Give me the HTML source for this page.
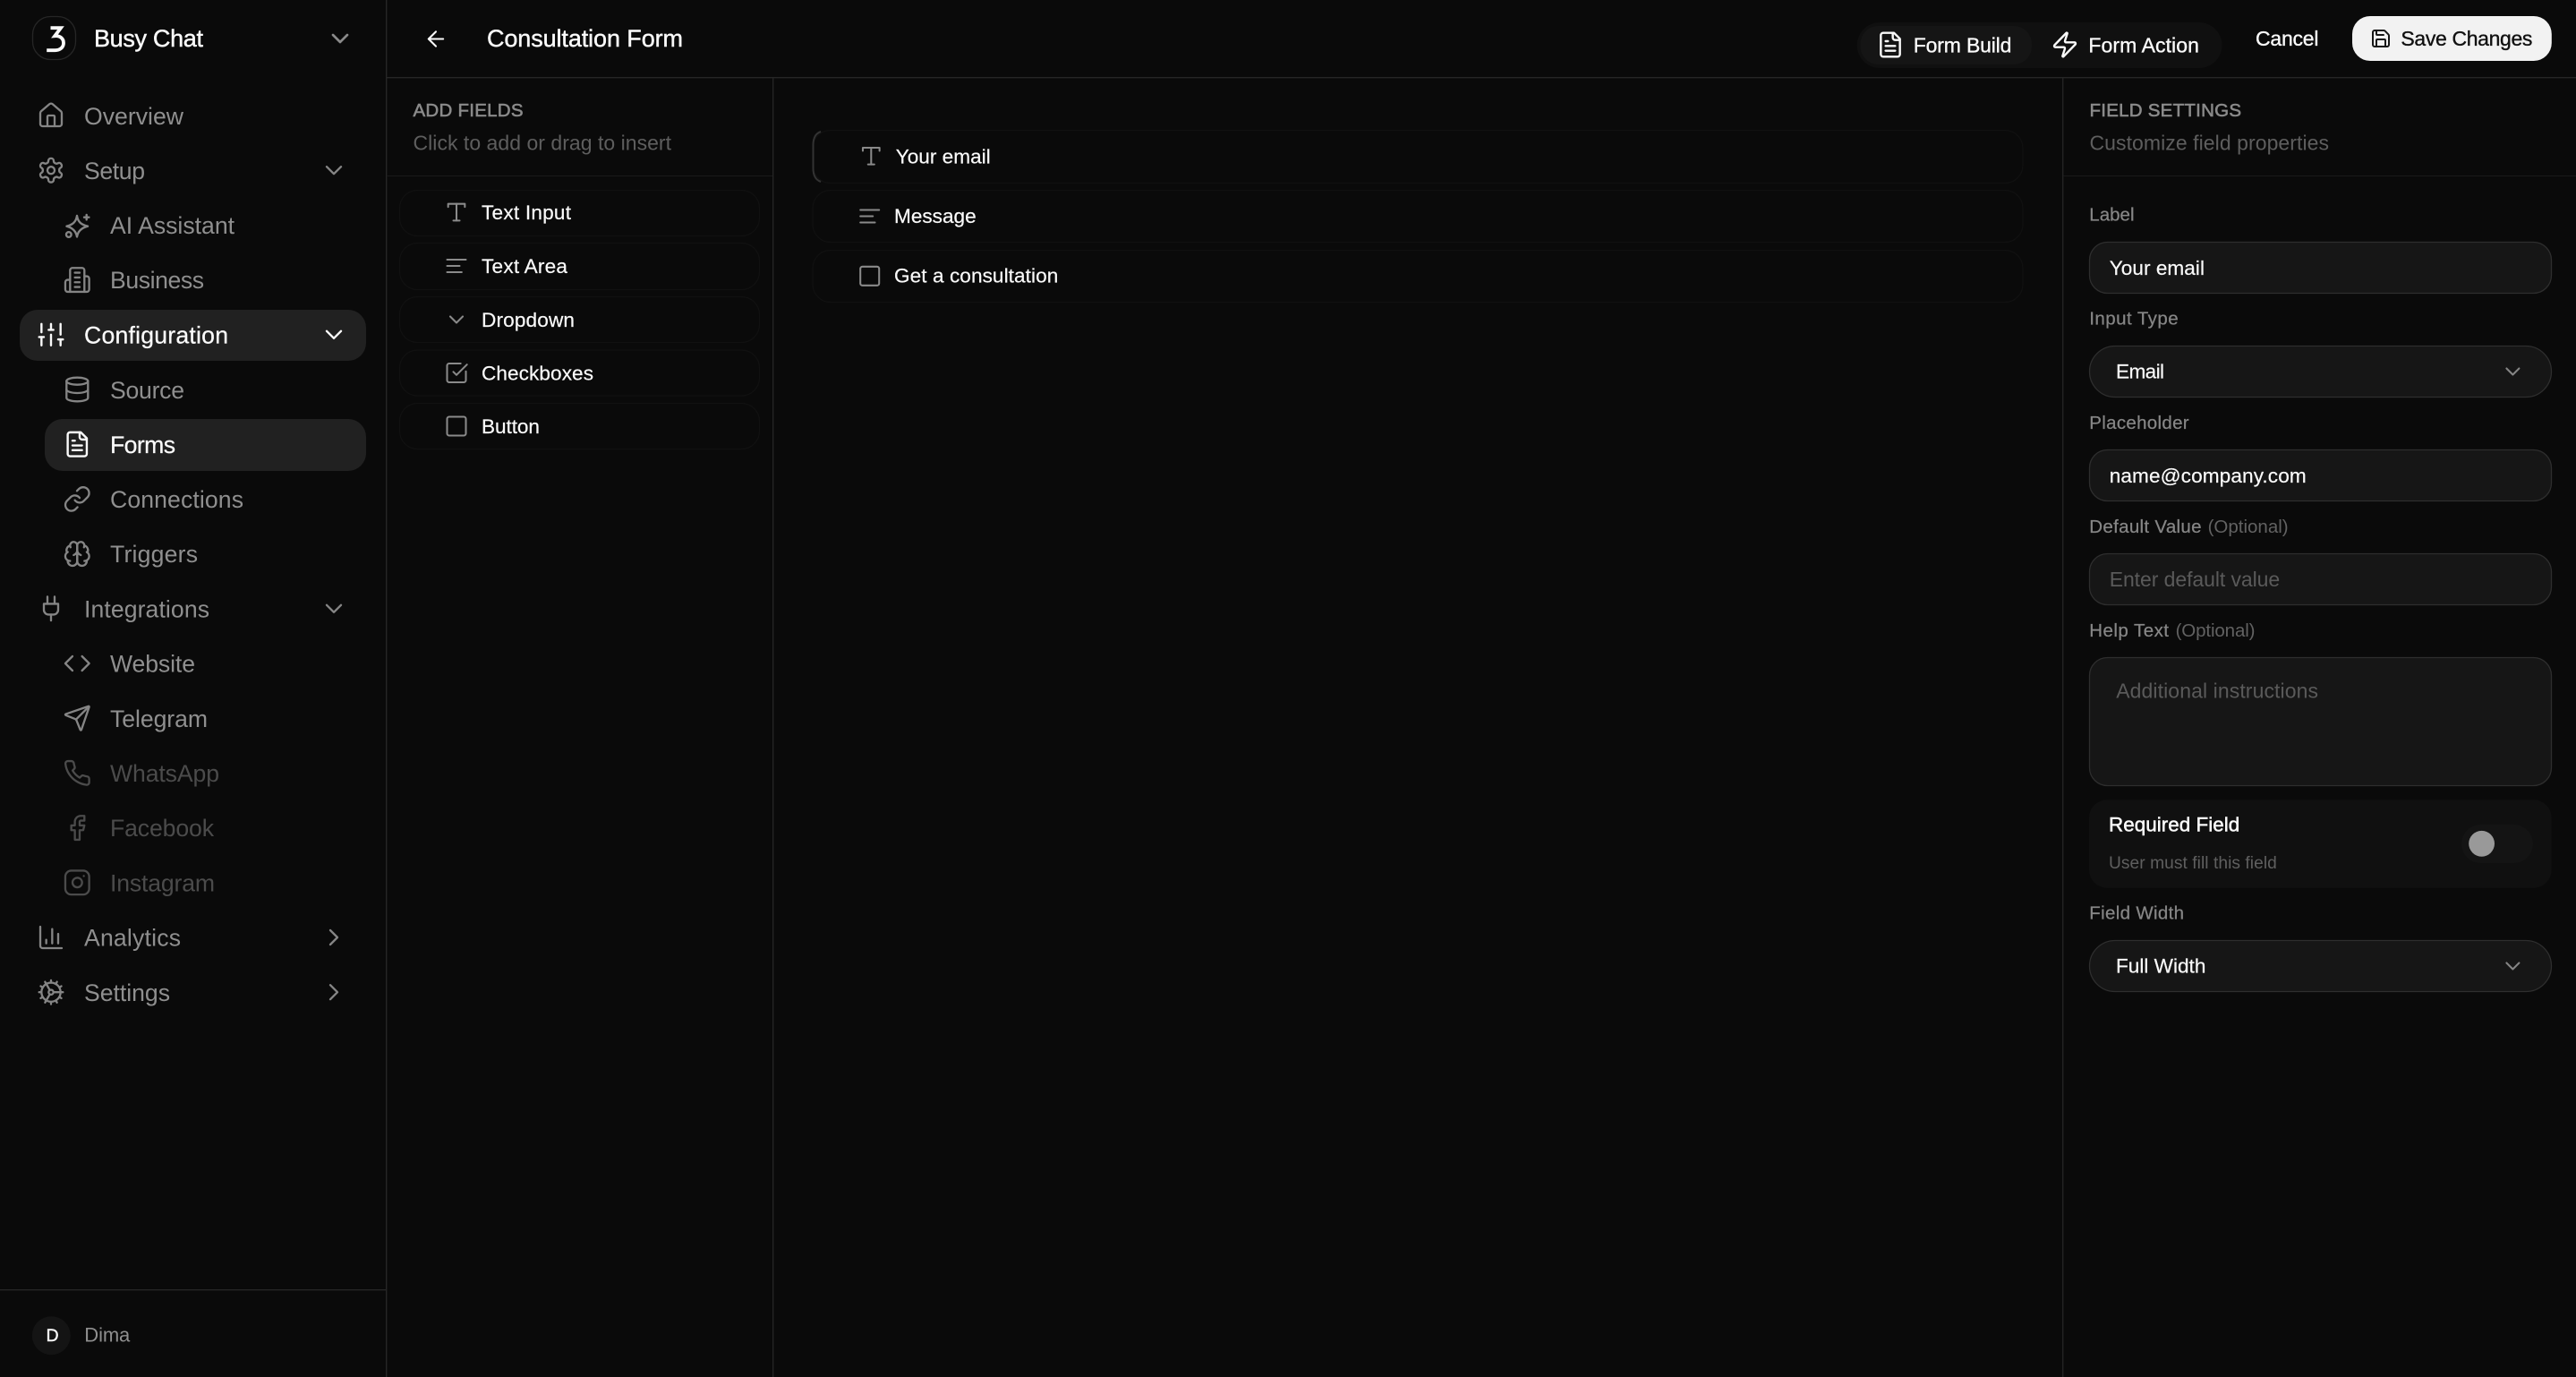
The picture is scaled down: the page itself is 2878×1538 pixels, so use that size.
<!DOCTYPE html>
<html lang="en">
<head>
<meta charset="utf-8">
<title>Consultation Form</title>
<style>
html,body{margin:0;padding:0;background:#0a0a0a;width:2878px;height:1538px;overflow:hidden}
svg{display:block}
text{font-family:"Liberation Sans",Arial,sans-serif}
.nav{font-size:26.6px;fill:#8f8f8f}
.on{font-size:26.6px;fill:#fafafa;stroke:#fafafa;stroke-width:.25px}
.dim{font-size:26.6px;fill:#4b4b4b}
.f{font-size:22.6px;fill:#fafafa;stroke:#fafafa;stroke-width:.2px}
.b{font-size:23px;fill:#fafafa;stroke:#fafafa;stroke-width:.35px}
.cap{font-size:20.5px;fill:#8a8a8a;stroke:#8a8a8a;stroke-width:.6px}
.sub{font-size:23px;fill:#5e5e5e}
.lab{font-size:20.5px;fill:#868686;stroke:#868686;stroke-width:.25px}
.opt{font-size:20.5px;fill:#626262}
.ph{font-size:23px;fill:#5a5a5a}
.i{fill:none;stroke-linecap:round;stroke-linejoin:round;stroke-width:2}
.mi{fill:none;stroke:#858585;stroke-linecap:round;stroke-linejoin:round;stroke-width:1.75}
.dmi{fill:none;stroke:#4b4b4b;stroke-linecap:round;stroke-linejoin:round;stroke-width:1.75}
.onicon{fill:none;stroke:#fafafa;stroke-linecap:round;stroke-linejoin:round;stroke-width:1.8}
.fi{fill:none;stroke:#8a8a8a;stroke-linecap:round;stroke-linejoin:round;stroke-width:1.75}
</style>
</head>
<body>
<svg xmlns="http://www.w3.org/2000/svg" width="2878" height="1538" viewBox="0 0 2878 1538">
<defs>
<g id="cd"><path d="m6 9 6 6 6-6"/></g>
<g id="cr"><path d="m9 18 6-6-6-6"/></g>
<g id="type"><polyline points="4 7 4 4 20 4 20 7"/><line x1="9" x2="15" y1="20" y2="20"/><line x1="12" x2="12" y1="4" y2="20"/></g>
<g id="align"><line x1="21" x2="3" y1="6" y2="6"/><line x1="15" x2="3" y1="12" y2="12"/><line x1="17" x2="3" y1="18" y2="18"/></g>
<g id="sq"><rect width="18" height="18" x="3" y="3" rx="2"/></g>
<g id="file"><path d="M15 2H6a2 2 0 0 0-2 2v16a2 2 0 0 0 2 2h12a2 2 0 0 0 2-2V7Z"/><path d="M14 2v4a2 2 0 0 0 2 2h4"/><path d="M10 9H8"/><path d="M16 13H8"/><path d="M16 17H8"/></g>
</defs>

<rect width="2878" height="1538" fill="#0a0a0a"/>

<!-- structure lines -->
<rect x="431" y="0" width="1.4" height="1538" fill="#262626"/>
<rect x="432" y="86" width="2446" height="1.4" fill="#262626"/>
<rect x="863" y="87" width="1.4" height="1451" fill="#242424"/>
<rect x="2304" y="87" width="1.4" height="1451" fill="#242424"/>
<rect x="432" y="196" width="431" height="1" fill="#1a1a1a"/>
<rect x="2305" y="196" width="573" height="1" fill="#1a1a1a"/>
<rect x="0" y="1440" width="431" height="1.4" fill="#262626"/>

<!-- logo -->
<rect x="36.5" y="18.5" width="48" height="48" rx="20" fill="#0a0a0a" stroke="#262626" stroke-width="1.3"/>
<path d="M56.5 31.2H68L61.2 40.2C67 39.6 71 43 71 48C71 53 67 56.2 61.5 56.2H52.2" fill="none" stroke="#fafafa" stroke-width="3.8" stroke-linejoin="miter"/>
<text x="105" y="52" textLength="122" font-size="27" fill="#fafafa" stroke="#fafafa" stroke-width=".45">Busy Chat</text>
<use href="#cd" class="i" stroke="#8a8a8a" transform="translate(364 27) scale(1.333)"/>

<!-- active pills -->
<rect x="22" y="346" width="387" height="57" rx="20" fill="#212121"/>
<rect x="50" y="468" width="359" height="58" rx="20" fill="#212121"/>

<!-- nav icons -->
<g class="mi" transform="translate(41 113) scale(1.333)"><path d="M15 21v-8a1 1 0 0 0-1-1h-4a1 1 0 0 0-1 1v8"/><path d="M3 10a2 2 0 0 1 .709-1.528l7-5.999a2 2 0 0 1 2.582 0l7 5.999A2 2 0 0 1 21 10v9a2 2 0 0 1-2 2H5a2 2 0 0 1-2-2z"/></g>
<g class="mi" transform="translate(41 174.2) scale(1.333)"><path d="M12.22 2h-.44a2 2 0 0 0-2 2v.18a2 2 0 0 1-1 1.73l-.43.25a2 2 0 0 1-2 0l-.15-.08a2 2 0 0 0-2.73.73l-.22.38a2 2 0 0 0 .73 2.73l.15.1a2 2 0 0 1 1 1.72v.51a2 2 0 0 1-1 1.74l-.15.09a2 2 0 0 0-.73 2.73l.22.38a2 2 0 0 0 2.73.73l.15-.08a2 2 0 0 1 2 0l.43.25a2 2 0 0 1 1 1.73V20a2 2 0 0 0 2 2h.44a2 2 0 0 0 2-2v-.18a2 2 0 0 1 1-1.73l.43-.25a2 2 0 0 1 2 0l.15.08a2 2 0 0 0 2.73-.73l.22-.39a2 2 0 0 0-.73-2.73l-.15-.08a2 2 0 0 1-1-1.74v-.5a2 2 0 0 1 1-1.74l.15-.09a2 2 0 0 0 .73-2.73l-.22-.38a2 2 0 0 0-2.73-.73l-.15.08a2 2 0 0 1-2 0l-.43-.25a2 2 0 0 1-1-1.73V4a2 2 0 0 0-2-2z"/><circle cx="12" cy="12" r="3"/></g>
<g fill="none" stroke="#858585" stroke-width="2.4" stroke-linecap="round" stroke-linejoin="round"><path d="M86 241C87 248 91 251 98 252.700C91 254.500 87 258 86 264.500C85 258 81 254.500 74.500 252.700C81 251 85 248 86 241Z"/><path d="M96.700 240v5.400M94 242.700h5.400"/><circle cx="76.800" cy="262" r="2.800"/></g>
<g class="mi" transform="translate(70.300 296.600) scale(1.333)"><path d="M6 22V4a2 2 0 0 1 2-2h8a2 2 0 0 1 2 2v18Z"/><path d="M6 12H4a2 2 0 0 0-2 2v6a2 2 0 0 0 2 2h2"/><path d="M18 9h2a2 2 0 0 1 2 2v9a2 2 0 0 1-2 2h-2"/><path d="M10 6h4"/><path d="M10 10h4"/><path d="M10 14h4"/><path d="M10 18h4"/></g>
<g class="onicon" transform="translate(41 357.800) scale(1.333)"><line x1="4" x2="4" y1="21" y2="14"/><line x1="4" x2="4" y1="10" y2="3"/><line x1="12" x2="12" y1="21" y2="12"/><line x1="12" x2="12" y1="8" y2="3"/><line x1="20" x2="20" y1="21" y2="16"/><line x1="20" x2="20" y1="12" y2="3"/><line x1="2" x2="6" y1="14" y2="14"/><line x1="10" x2="14" y1="8" y2="8"/><line x1="18" x2="22" y1="16" y2="16"/></g>
<g class="mi" transform="translate(70.300 419) scale(1.333)"><ellipse cx="12" cy="5" rx="9" ry="3"/><path d="M3 5V19A9 3 0 0 0 21 19V5"/><path d="M3 12A9 3 0 0 0 21 12"/></g>
<use href="#file" class="onicon" transform="translate(70.300 480.200) scale(1.333)"/>
<g class="mi" transform="translate(70.300 541.400) scale(1.333)"><path d="M10 13a5 5 0 0 0 7.54.54l3-3a5 5 0 0 0-7.07-7.07l-1.72 1.71"/><path d="M14 11a5 5 0 0 0-7.54-.54l-3 3a5 5 0 0 0 7.07 7.07l1.71-1.71"/></g>
<g class="mi" transform="translate(70.300 602.600) scale(1.333)"><path d="M12 5a3 3 0 1 0-5.997.125 4 4 0 0 0-2.526 5.77 4 4 0 0 0 .556 6.588A4 4 0 1 0 12 18Z"/><path d="M12 5a3 3 0 1 1 5.997.125 4 4 0 0 1 2.526 5.77 4 4 0 0 1-.556 6.588A4 4 0 1 1 12 18Z"/><path d="M15 13a4.5 4.5 0 0 1-3-4 4.5 4.5 0 0 1-3 4"/><path d="M17.599 6.5a3 3 0 0 0 .399-1.375"/><path d="M6.003 5.125A3 3 0 0 0 6.401 6.5"/><path d="M3.477 10.896a4 4 0 0 1 .585-.396"/><path d="M19.938 10.5a4 4 0 0 1 .585.396"/><path d="M6 18a4 4 0 0 1-1.967-.516"/><path d="M19.967 17.484A4 4 0 0 1 18 18"/></g>
<g class="mi" transform="translate(41 663.800) scale(1.333)"><path d="M12 22v-5"/><path d="M9 8V2"/><path d="M15 8V2"/><path d="M18 8v5a4 4 0 0 1-4 4h-4a4 4 0 0 1-4-4V8Z"/></g>
<g class="mi" transform="translate(70.300 725) scale(1.333)"><polyline points="16 18 22 12 16 6"/><polyline points="8 6 2 12 8 18"/></g>
<g class="mi" transform="translate(70.300 786.200) scale(1.333)"><path d="M14.536 21.686a.5.5 0 0 0 .937-.024l6.5-19a.496.496 0 0 0-.635-.635l-19 6.5a.5.5 0 0 0-.024.937l7.93 3.18a2 2 0 0 1 1.112 1.11z"/><path d="m21.854 2.147-10.94 10.939"/></g>
<g class="dmi" transform="translate(70.300 847.400) scale(1.333)"><path d="M22 16.92v3a2 2 0 0 1-2.18 2 19.79 19.79 0 0 1-8.63-3.07 19.5 19.5 0 0 1-6-6 19.79 19.79 0 0 1-3.07-8.67A2 2 0 0 1 4.11 2h3a2 2 0 0 1 2 1.72 12.84 12.84 0 0 0 .7 2.81 2 2 0 0 1-.45 2.11L8.09 9.91a16 16 0 0 0 6 6l1.27-1.27a2 2 0 0 1 2.11-.45 12.84 12.84 0 0 0 2.81.7A2 2 0 0 1 22 16.92z"/></g>
<g class="dmi" transform="translate(70.300 908.600) scale(1.333)"><path d="M18 2h-3a5 5 0 0 0-5 5v3H7v4h3v8h4v-8h3l1-4h-4V7a1 1 0 0 1 1-1h3z"/></g>
<g class="dmi" transform="translate(70.300 969.800) scale(1.333)"><rect width="20" height="20" x="2" y="2" rx="5" ry="5"/><path d="M16 11.37A4 4 0 1 1 12.63 8 4 4 0 0 1 16 11.37z"/><line x1="17.5" x2="17.51" y1="6.5" y2="6.5"/></g>
<g class="mi" transform="translate(41 1031) scale(1.333)"><path d="M3 3v16a2 2 0 0 0 2 2h16"/><path d="M18 17V9"/><path d="M13 17V5"/><path d="M8 17v-3"/></g>
<g class="mi" transform="translate(41 1092.200) scale(1.333)"><path d="M12 20a8 8 0 1 0 0-16 8 8 0 0 0 0 16Z"/><path d="M12 14a2 2 0 1 0 0-4 2 2 0 0 0 0 4Z"/><path d="M12 2v2"/><path d="M12 22v-2"/><path d="m17 20.66-1-1.73"/><path d="M11 10.27 7 3.34"/><path d="m20.66 17-1.73-1"/><path d="m3.34 7 1.73 1"/><path d="M14 12h8"/><path d="M2 12h2"/><path d="m20.66 7-1.73 1"/><path d="m3.34 17 1.73-1"/><path d="m17 3.34-1 1.73"/><path d="M11 13.73l-4 6.93"/></g>

<!-- nav chevrons -->
<use href="#cd" class="mi" transform="translate(357 174.200) scale(1.333)"/>
<use href="#cd" class="onicon" transform="translate(357 357.800) scale(1.333)"/>
<use href="#cd" class="mi" transform="translate(357 663.800) scale(1.333)"/>
<use href="#cr" class="mi" transform="translate(357 1031) scale(1.333)"/>
<use href="#cr" class="mi" transform="translate(357 1092.200) scale(1.333)"/>

<!-- nav text -->
<text class="nav" x="94" y="139" textLength="111">Overview</text>
<text class="nav" x="94" y="200" textLength="68">Setup</text>
<text class="nav" x="123" y="261" textLength="139">AI Assistant</text>
<text class="nav" x="123" y="322" textLength="105">Business</text>
<text class="on" x="94" y="383.300" textLength="161">Configuration</text>
<text class="nav" x="123" y="445" textLength="83">Source</text>
<text class="on" x="123" y="506" textLength="73">Forms</text>
<text class="nav" x="123" y="567" textLength="149">Connections</text>
<text class="nav" x="123" y="628" textLength="98">Triggers</text>
<text class="nav" x="94" y="689.400" textLength="140">Integrations</text>
<text class="nav" x="123" y="750.600" textLength="95">Website</text>
<text class="nav" x="123" y="811.800" textLength="109">Telegram</text>
<text class="dim" x="123" y="873" textLength="122">WhatsApp</text>
<text class="dim" x="123" y="934.200" textLength="116">Facebook</text>
<text class="dim" x="123" y="995.400" textLength="117">Instagram</text>
<text class="nav" x="94" y="1056.600" textLength="108">Analytics</text>
<text class="nav" x="94" y="1117.800" textLength="96">Settings</text>

<!-- user -->
<circle cx="57.300" cy="1491.700" r="21.500" fill="#141414"/>
<text x="51.500" y="1498" textLength="12" font-size="19.500" fill="#fafafa" stroke="#fafafa" stroke-width=".4">D</text>
<text x="94.300" y="1498.500" textLength="51" font-size="22" fill="#8f8f8f">Dima</text>

<!-- top bar -->
<g class="onicon" transform="translate(473 29.500) scale(1.167)"><path d="m12 19-7-7 7-7"/><path d="M19 12H5"/></g>
<text x="544" y="52" textLength="219" font-size="27" fill="#fafafa" stroke="#fafafa" stroke-width=".4">Consultation Form</text>

<rect x="2074.700" y="25" width="407.800" height="51" rx="25.500" fill="#101010"/>
<rect x="2078.500" y="29" width="191.500" height="43" rx="20" fill="#151515"/>
<use href="#file" class="onicon" transform="translate(2096 34) scale(1.333)"/>
<text class="b" x="2137.800" y="58.300" textLength="109.600">Form Build</text>
<g class="onicon" transform="translate(2291 34) scale(1.333)"><path d="M4 14a1 1 0 0 1-.78-1.63l9.9-10.2a.5.5 0 0 1 .86.46l-1.92 6.02A1 1 0 0 0 13 10h7a1 1 0 0 1 .78 1.63l-9.9 10.2a.5.5 0 0 1-.86-.46l1.92-6.02A1 1 0 0 0 11 14z"/></g>
<text class="b" x="2333.400" y="58.300" textLength="123.500">Form Action</text>
<text class="b" x="2520" y="51" textLength="70.500">Cancel</text>
<rect x="2628" y="18" width="222.800" height="50" rx="20" fill="#f2f2f2"/>
<g fill="none" stroke="#171717" stroke-width="2" stroke-linecap="round" stroke-linejoin="round" transform="translate(2648 31)"><path d="M15.2 3a2 2 0 0 1 1.4.6l3.8 3.8a2 2 0 0 1 .6 1.4V19a2 2 0 0 1-2 2H5a2 2 0 0 1-2-2V5a2 2 0 0 1 2-2z"/><path d="M17 21v-7a1 1 0 0 0-1-1H8a1 1 0 0 0-1 1v7"/><path d="M7 3v4a1 1 0 0 0 1 1h7"/></g>
<text x="2682.400" y="51" textLength="147" font-size="23" fill="#111111" stroke="#111111" stroke-width=".35">Save Changes</text>

<!-- add fields column -->
<text class="cap" x="461.500" y="130" textLength="123">ADD FIELDS</text>
<text class="sub" x="461.500" y="167.700" textLength="288.500">Click to add or drag to insert</text>
<g fill="#0a0a0a" stroke="#111111" stroke-width="1.200">
<rect x="446.500" y="212.500" width="402" height="51" rx="20"/>
<rect x="446.500" y="271.500" width="402" height="52" rx="20"/>
<rect x="446.500" y="331.500" width="402" height="51" rx="20"/>
<rect x="446.500" y="391" width="402" height="51" rx="20"/>
<rect x="446.500" y="450.500" width="402" height="51" rx="20"/>
</g>
<use href="#type" class="fi" transform="translate(496 223) scale(1.167)"/>
<use href="#align" class="fi" transform="translate(496 283) scale(1.167)"/>
<use href="#cd" class="fi" transform="translate(496 343) scale(1.167)"/>
<g class="fi" transform="translate(496 402.500) scale(1.167)"><path d="M21 10.5V19a2 2 0 0 1-2 2H5a2 2 0 0 1-2-2V5a2 2 0 0 1 2-2h11"/><path d="m9 11 3 3L22 4"/></g>
<use href="#sq" class="fi" transform="translate(496 462) scale(1.167)"/>
<text class="f" x="538" y="245" textLength="100">Text Input</text>
<text class="f" x="538" y="305" textLength="96">Text Area</text>
<text class="f" x="538" y="365" textLength="104">Dropdown</text>
<text class="f" x="538" y="424.500" textLength="125">Checkboxes</text>
<text class="f" x="538" y="484" textLength="65">Button</text>

<!-- canvas fields -->
<g fill="#0a0a0a" stroke="#111111" stroke-width="1.200">
<rect x="908" y="145.500" width="1352" height="59" rx="20"/>
<rect x="908" y="212.500" width="1352" height="58" rx="20"/>
<rect x="908" y="279.500" width="1352" height="58" rx="20"/>
</g>
<path d="M917 147Q908.500 150 908.500 162V188Q908.500 200 917 203" fill="none" stroke="#333333" stroke-width="2"/>
<use href="#type" class="fi" transform="translate(959.300 160.300) scale(1.167)"/>
<use href="#align" class="fi" transform="translate(957.700 227.500) scale(1.167)"/>
<use href="#sq" class="fi" transform="translate(957.700 294.300) scale(1.167)"/>
<text class="f" x="1000.700" y="182.300" textLength="106">Your email</text>
<text class="f" x="999" y="249" textLength="91.700">Message</text>
<text class="f" x="999" y="315.700" textLength="183.300">Get a consultation</text>

<!-- settings column -->
<text class="cap" x="2334.500" y="130" textLength="169.500">FIELD SETTINGS</text>
<text class="sub" x="2334.500" y="167.700" textLength="267.500">Customize field properties</text>

<text class="lab" x="2334.300" y="246.700" textLength="50.200">Label</text>
<rect x="2334.500" y="270.500" width="516" height="57" rx="20" fill="#161616" stroke="#2e2e2e" stroke-width="1.300"/>
<text class="f" x="2356.700" y="307" textLength="106.300">Your email</text>

<text class="lab" x="2334.300" y="362.700" textLength="99.300">Input Type</text>
<rect x="2334.500" y="386.500" width="516" height="57" rx="28.500" fill="#161616" stroke="#2e2e2e" stroke-width="1.300"/>
<text class="f" x="2364" y="422.700" textLength="54">Email</text>
<use href="#cd" class="mi" transform="translate(2793.400 401) scale(1.167)"/>

<text class="lab" x="2334.300" y="479" textLength="111.300">Placeholder</text>
<rect x="2334.500" y="502.500" width="516" height="57" rx="20" fill="#161616" stroke="#2e2e2e" stroke-width="1.300"/>
<text class="f" x="2356.700" y="539" textLength="220">name@company.com</text>

<text class="lab" x="2334.300" y="595" textLength="125.200">Default Value</text>
<text class="opt" x="2466.600" y="595" textLength="90">(Optional)</text>
<rect x="2334.500" y="618.500" width="516" height="57" rx="20" fill="#161616" stroke="#2e2e2e" stroke-width="1.300"/>
<text class="ph" x="2356.700" y="655" textLength="190.500">Enter default value</text>

<text class="lab" x="2334.300" y="711" textLength="88.700">Help Text</text>
<text class="opt" x="2430.600" y="711" textLength="88.900">(Optional)</text>
<rect x="2334.500" y="734.500" width="516" height="143" rx="20" fill="#161616" stroke="#2e2e2e" stroke-width="1.300"/>
<text class="ph" x="2364.200" y="779.300" textLength="225.800">Additional instructions</text>

<rect x="2334" y="893.300" width="516.600" height="98.400" rx="20" fill="#101010"/>
<text x="2356" y="928.300" textLength="146.200" font-size="22.400" fill="#fafafa" stroke="#fafafa" stroke-width=".5">Required Field</text>
<text x="2356" y="970" textLength="187.800" font-size="19.200" fill="#5f5f5f">User must fill this field</text>
<rect x="2750" y="921" width="80" height="43" rx="21.500" fill="#141414"/>
<circle cx="2772.600" cy="942.300" r="14.400" fill="#999999"/>

<text class="lab" x="2334.300" y="1026.700" textLength="105.700">Field Width</text>
<rect x="2334.500" y="1050.500" width="516" height="57" rx="28.500" fill="#161616" stroke="#2e2e2e" stroke-width="1.300"/>
<text class="f" x="2364" y="1086.700" textLength="100.400">Full Width</text>
<use href="#cd" class="mi" transform="translate(2793.400 1065) scale(1.167)"/>
</svg>
</body>
</html>
